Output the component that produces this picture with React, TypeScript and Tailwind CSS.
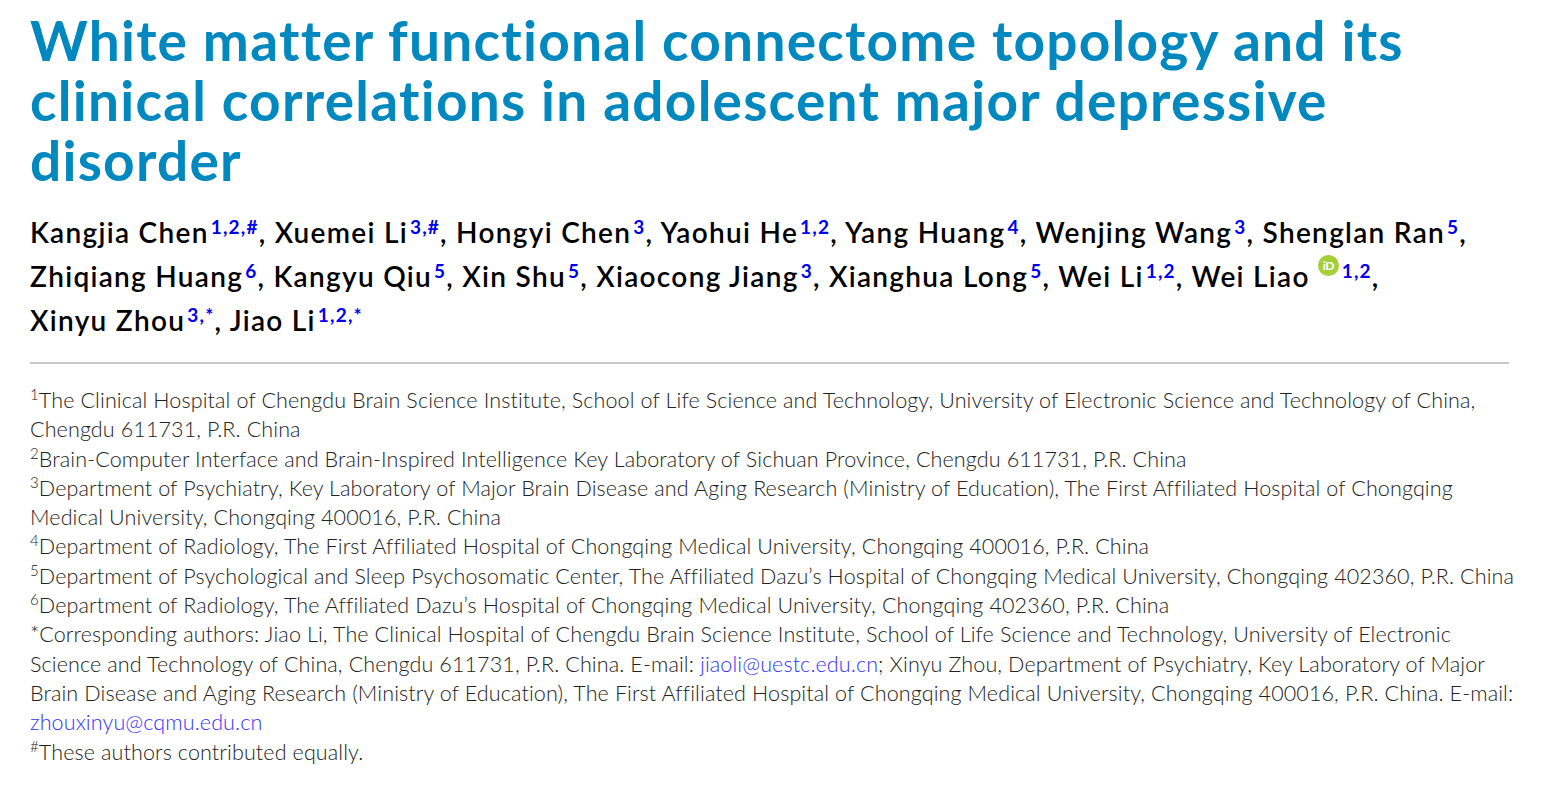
import React from "react";

const Sup = ({ children }: { children: React.ReactNode }) => (
  <span className="inline-block text-[19px] leading-none font-bold text-[#0000ee] relative top-[-9px] ml-[2px] tracking-[1.2px]">{children}</span>
);

const A = ({ name, sup, last }: { name: string; sup: React.ReactNode; last?: boolean }) => (
  <>
    {name}
    <Sup>{sup}</Sup>
    {last ? "" : ", "}
  </>
);

const Orcid = () => (
  <span className="inline-flex items-center justify-center w-[21px] h-[21px] rounded-full bg-[#a6ce39] text-white text-[12px] font-bold align-middle relative top-[-14px] ml-[8px] mr-[1px] leading-none tracking-[-0.5px]">
    iD
  </span>
);

const aff = "text-[21.5px] leading-[29.3px] tracking-[0.12px] text-[#222] font-light whitespace-nowrap";
const asup = "inline-block text-[15px] relative top-[-8px] leading-none";

export default function App() {
  return (
    <div className="w-[1550px] h-[790px] bg-white overflow-hidden" style={{ fontFamily: "Lato, 'Open Sans', sans-serif" }}>
      <div className="ml-[30px] w-[1479px] pt-[10px]">
        <h1 className="text-[55px] leading-[60px] font-bold text-[#0088bf] tracking-[1.25px]">
          <div className="whitespace-nowrap">White matter functional connectome topology and its</div>
          <div className="whitespace-nowrap">clinical correlations in adolescent major depressive</div>
          <div className="whitespace-nowrap">disorder</div>
        </h1>
        <div className="mt-[20px] text-[28px] leading-[44px] font-semibold text-black tracking-[1.3px]">
          <div className="whitespace-nowrap">
            <A name="Kangjia Chen" sup="1,2,#" />
            <A name="Xuemei Li" sup="3,#" />
            <A name="Hongyi Chen" sup="3" />
            <A name="Yaohui He" sup="1,2" />
            <A name="Yang Huang" sup="4" />
            <A name="Wenjing Wang" sup="3" />
            <A name="Shenglan Ran" sup="5" />
          </div>
          <div className="whitespace-nowrap">
            <A name="Zhiqiang Huang" sup="6" />
            <A name="Kangyu Qiu" sup="5" />
            <A name="Xin Shu" sup="5" />
            <A name="Xiaocong Jiang" sup="3" />
            <A name="Xianghua Long" sup="5" />
            <A name="Wei Li" sup="1,2" />
            Wei Liao
            <Orcid />
            <Sup>1,2</Sup>,
          </div>
          <div className="whitespace-nowrap">
            <A name="Xinyu Zhou" sup="3,*" />
            <A name="Jiao Li" sup="1,2,*" last />
          </div>
        </div>
        <div className="mt-[20px] h-[2px] bg-[#c8c8c8]" />
        <div className="mt-[22px]">
          <div className={aff}><span className={asup}>1</span>The Clinical Hospital of Chengdu Brain Science Institute, School of Life Science and Technology, University of Electronic Science and Technology of China,</div>
          <div className={aff}>Chengdu 611731, P.R. China</div>
          <div className={aff}><span className={asup}>2</span>Brain-Computer Interface and Brain-Inspired Intelligence Key Laboratory of Sichuan Province, Chengdu 611731, P.R. China</div>
          <div className={aff}><span className={asup}>3</span>Department of Psychiatry, Key Laboratory of Major Brain Disease and Aging Research (Ministry of Education), The First Affiliated Hospital of Chongqing</div>
          <div className={aff}>Medical University, Chongqing 400016, P.R. China</div>
          <div className={aff}><span className={asup}>4</span>Department of Radiology, The First Affiliated Hospital of Chongqing Medical University, Chongqing 400016, P.R. China</div>
          <div className={aff}><span className={asup}>5</span>Department of Psychological and Sleep Psychosomatic Center, The Affiliated Dazu’s Hospital of Chongqing Medical University, Chongqing 402360, P.R. China</div>
          <div className={aff}><span className={asup}>6</span>Department of Radiology, The Affiliated Dazu’s Hospital of Chongqing Medical University, Chongqing 402360, P.R. China</div>
          <div className={aff}>*Corresponding authors: Jiao Li, The Clinical Hospital of Chengdu Brain Science Institute, School of Life Science and Technology, University of Electronic</div>
          <div className={aff}>Science and Technology of China, Chengdu 611731, P.R. China. E-mail: <span className="text-[#3333ff]">jiaoli@uestc.edu.cn</span>; Xinyu Zhou, Department of Psychiatry, Key Laboratory of Major</div>
          <div className={aff}>Brain Disease and Aging Research (Ministry of Education), The First Affiliated Hospital of Chongqing Medical University, Chongqing 400016, P.R. China. E-mail:</div>
          <div className={aff}><span className="text-[#3333ff]">zhouxinyu@cqmu.edu.cn</span></div>
          <div className={aff}><span className={asup}>#</span>These authors contributed equally.</div>
        </div>
      </div>
    </div>
  );
}
